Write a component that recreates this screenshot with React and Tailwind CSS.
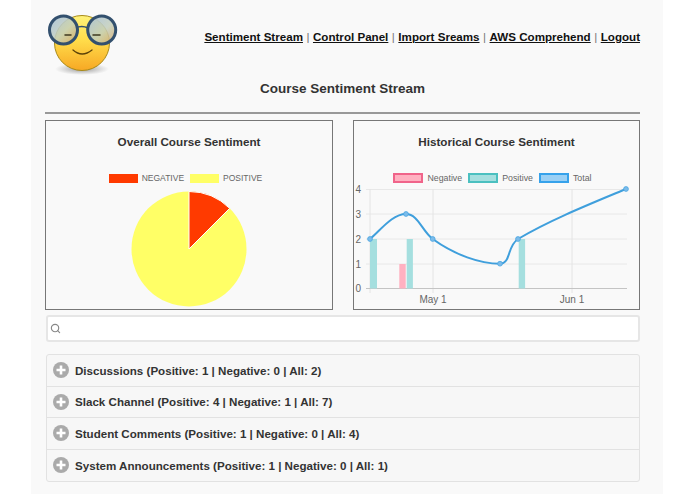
import React from 'react';
import { Search } from 'lucide-react';

const FONT = "font-['Liberation_Sans',Arial,sans-serif]";

const NAV = ['Sentiment Stream', 'Control Panel', 'Import Sreams', 'AWS Comprehend', 'Logout'];

const ROWS = [
  'Discussions (Positive: 1 | Negative: 0 | All: 2)',
  'Slack Channel (Positive: 4 | Negative: 1 | All: 7)',
  'Student Comments (Positive: 1 | Negative: 0 | All: 4)',
  'System Announcements (Positive: 1 | Negative: 0 | All: 1)',
];

const Logo = () => (
  <svg width="70" height="62" viewBox="0 0 70 62" className="block">
    <defs>
      <linearGradient id="face" x1="0" y1="0" x2="0" y2="1">
        <stop offset="0%" stopColor="#fff27a" />
        <stop offset="45%" stopColor="#ffdc4a" />
        <stop offset="100%" stopColor="#f7a824" />
      </linearGradient>
      <radialGradient id="shadow" cx="50%" cy="50%" r="50%">
        <stop offset="0%" stopColor="#777" stopOpacity="0.75" />
        <stop offset="100%" stopColor="#888" stopOpacity="0" />
      </radialGradient>
      <linearGradient id="lens" x1="0" y1="0" x2="1" y2="1">
        <stop offset="0%" stopColor="#a9c2dc" stopOpacity="0.95" />
        <stop offset="55%" stopColor="#c3cfbd" stopOpacity="0.85" />
        <stop offset="100%" stopColor="#d8a860" stopOpacity="0.85" />
      </linearGradient>
    </defs>
    <ellipse cx="34" cy="55" rx="27" ry="6" fill="url(#shadow)" />
    <circle cx="34" cy="29" r="27.5" fill="url(#face)" stroke="#a88a18" strokeWidth="1" />
    <path d="M25 36 Q34 44 44 36" fill="none" stroke="#5c4208" strokeWidth="1.3" strokeLinecap="round" />
    <path d="M27 14 Q34 11 40 14" fill="none" stroke="#33506e" strokeWidth="1.6" />
    <circle cx="15.5" cy="16" r="14" fill="url(#lens)" stroke="#33506e" strokeWidth="3" />
    <circle cx="53.7" cy="16" r="14" fill="url(#lens)" stroke="#33506e" strokeWidth="3" />
    <path d="M17 21 H23 M45 21 H52" stroke="#3f3a20" strokeWidth="1.5" strokeLinecap="round" />
  </svg>
);

const PieChart = () => (
  <svg width="118" height="118" viewBox="-59 -59 118 118" className="block">
    <circle r="57.5" fill="#ffff66" />
    <path d="M0 0 L0 -57.5 A57.5 57.5 0 0 1 40.66 -40.66 Z" fill="#ff3a00" stroke="#fff" strokeWidth="1" />
  </svg>
);

// plot coordinates are page pixels, shifted to the svg's origin
const LineChart = () => {
  const x = (v) => v - 354;
  const y = (v) => v - 185;
  const pts = [[370, 239], [406, 214], [432.7, 239], [500, 263.7], [518, 239], [626, 189]];
  const grid = [189.5, 214, 239, 264];
  return (
    <svg width="285" height="120" viewBox="0 0 285 120" className="block">
      {grid.map((g) => (
        <line key={g} x1={x(366)} x2={x(627)} y1={y(g)} y2={y(g)} stroke="#e8e8e8" />
      ))}
      {[370, 433, 572].map((g) => (
        <line key={g} x1={x(g)} x2={x(g)} y1={y(189)} y2={y(293)} stroke="#e4e4e4" />
      ))}
      <line x1={x(366)} x2={x(627)} y1={y(288.5)} y2={y(288.5)} stroke="#c4c4c4" />
      <rect x={x(370)} y={y(239)} width="7" height="49.5" fill="#a5dfdf" />
      <rect x={x(399.3)} y={y(264)} width="6.4" height="24.5" fill="#ffb1c1" />
      <rect x={x(406.7)} y={y(239)} width="6.2" height="49.5" fill="#a5dfdf" />
      <rect x={x(518.7)} y={y(239)} width="6.4" height="49.5" fill="#a5dfdf" />
      <path
        d={`M${x(370)} ${y(239)} C${x(380)} ${y(231)} ${x(392)} ${y(214)} ${x(406)} ${y(214)} C${x(418)} ${y(214)} ${x(422)} ${y(231)} ${x(432.7)} ${y(239)} C${x(455)} ${y(255)} ${x(480)} ${y(263.7)} ${x(500)} ${y(263.7)} C${x(511)} ${y(263.7)} ${x(507)} ${y(246)} ${x(518)} ${y(239)} C${x(550)} ${y(220)} ${x(590)} ${y(204)} ${x(626)} ${y(189)}`}
        fill="none"
        stroke="#3f9fdc"
        strokeWidth="2"
      />
      {pts.map(([a, b]) => (
        <circle key={a} cx={x(a)} cy={y(b)} r="2.4" fill="#7cbcea" stroke="#4aa6e2" strokeWidth="0.8" />
      ))}
      {[['4', 189.5], ['3', 214], ['2', 239], ['1', 264], ['0', 288.5]].map(([t, v]) => (
        <text key={t} x={x(361)} y={y(v) + 3.5} textAnchor="end" fontSize="10" fill="#666" fontFamily="Liberation Sans">{t}</text>
      ))}
      <text x={x(433)} y={y(303)} textAnchor="middle" fontSize="10" fill="#666" fontFamily="Liberation Sans">May 1</text>
      <text x={x(572)} y={y(303)} textAnchor="middle" fontSize="10" fill="#666" fontFamily="Liberation Sans">Jun 1</text>
    </svg>
  );
};

const Panel = ({ title, className, children }) => (
  <div className={`h-[190px] border border-[#777] flex flex-col overflow-hidden ${className}`}>
    <h3 className="mt-[14px] text-center text-[11.7px] leading-[14px] font-bold text-[#333]">{title}</h3>
    {children}
  </div>
);

const App = () => (
  <div className={`min-h-[494px] w-[695px] bg-white ${FONT}`}>
    <div className="ml-[31px] h-[494px] w-[632px] bg-[#f9f9f9] pl-[14px] pr-[23px] overflow-hidden">
      {/* Header */}
      <div className="flex h-[76px] items-start justify-between">
        <div className="ml-[3px] mt-[14px]">
          <Logo />
        </div>
        <nav className="mt-[30px] flex items-center text-[11.6px] leading-[14px] font-bold text-[#111]">
          {NAV.map((item, i) => (
            <React.Fragment key={item}>
              {i > 0 && <span className="mx-[3.5px] font-normal text-[#777]">|</span>}
              <a className="underline">{item}</a>
            </React.Fragment>
          ))}
        </nav>
      </div>

      <h2 className="mt-[5px] text-center text-[13.5px] leading-[16px] font-bold text-[#333]">Course Sentiment Stream</h2>

      <div className="mt-[15px] border-t-2 border-[#999]" />
      <div className="mt-[6px] flex justify-between">
        <Panel title="Overall Course Sentiment" className="w-[288px]">
          <div className="mt-[24px] flex items-center justify-center pr-[7px] text-[8.5px] leading-[10px] text-[#666]">
            <span className="block h-[9px] w-[29px] bg-[#ff3a00]" />
            <span className="ml-[4px] mr-[6px]">NEGATIVE</span>
            <span className="block h-[9px] w-[29px] bg-[#ffff66]" />
            <span className="ml-[4px]">POSITIVE</span>
          </div>
          <div className="mt-[7px] flex justify-center">
            <PieChart />
          </div>
        </Panel>
        <Panel title="Historical Course Sentiment" className="w-[287px]">
          <div className="mt-[24px] flex items-center justify-center pr-[8px] text-[8.8px] leading-[10px] text-[#666]">
            <span className="block h-[10px] w-[30px] border-2 border-[#f0648a] bg-[#ffb1c1]" />
            <span className="ml-[4px] mr-[6px]">Negative</span>
            <span className="block h-[10px] w-[30px] border-2 border-[#4bc0c0] bg-[#a5dfdf]" />
            <span className="ml-[4px] mr-[6px]">Positive</span>
            <span className="block h-[10px] w-[30px] border-2 border-[#36a2eb] bg-[#9ad0f5]" />
            <span className="ml-[4px]">Total</span>
          </div>
          <div className="mt-[2px]">
            <LineChart />
          </div>
        </Panel>
      </div>

      {/* Search */}
      <div className="ml-px mt-[5px] flex h-[27px] items-center rounded-[3px] border-2 border-[#e6e6e6] bg-white pl-[2px]">
        <Search size={11} strokeWidth={2.5} className="text-[#888]" />
      </div>

      {/* Accordion */}
      <div className="ml-px mt-[12px] rounded-[3px] border border-[#e2e2e2] divide-y divide-[#e2e2e2] bg-[#f7f7f7]">
        {ROWS.map((row) => (
          <div key={row} className="flex h-[31.5px] items-center pl-[6px] text-[11.6px] font-bold text-[#333]">
            <svg width="16" height="16" viewBox="0 0 16 16" className="mr-[6px] shrink-0">
              <circle cx="8" cy="8" r="8" fill="#aaa" />
              <path d="M8 3.5 V12.5 M3.5 8 H12.5" stroke="#fff" strokeWidth="2.6" />
            </svg>
            {row}
          </div>
        ))}
      </div>
    </div>
  </div>
);

export default App;
